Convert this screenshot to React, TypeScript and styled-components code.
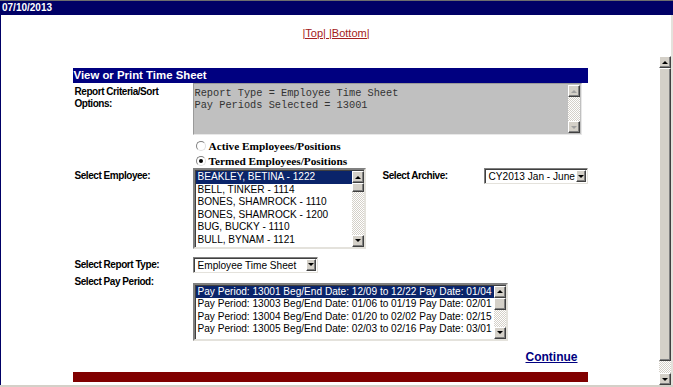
import styled, { createGlobalStyle } from "styled-components"

const GlobalStyle = createGlobalStyle`
    html, body {
        margin: 0;
        padding: 0;
        background: #fff;
    }
    body {
        width: 673px;
        height: 387px;
        overflow: hidden;
        font-family: "Liberation Sans", Arial, sans-serif;
    }
`

const employees = [
    "BEAKLEY, BETINA - 1222",
    "BELL, TINKER - 1114",
    "BONES, SHAMROCK - 1110",
    "BONES, SHAMROCK - 1200",
    "BUG, BUCKY - 1110",
    "BULL, BYNAM - 1121",
]

const payPeriods = [
    "Pay Period: 13001 Beg/End Date: 12/09 to 12/22 Pay Date: 01/04",
    "Pay Period: 13003 Beg/End Date: 01/06 to 01/19 Pay Date: 02/01",
    "Pay Period: 13004 Beg/End Date: 01/20 to 02/02 Pay Date: 02/15",
    "Pay Period: 13005 Beg/End Date: 02/03 to 02/16 Pay Date: 03/01",
]

interface ScrollBarProps {
    thumb?: number
    disabled?: boolean
    width?: number
}

const ScrollBar = ({ thumb, disabled, width = 12 }: ScrollBarProps) => (
    <Track $w={width}>
        <ArrowBtn><Arrow $up $disabled={disabled} /></ArrowBtn>
        {thumb ? <Thumb $h={thumb} /> : null}
        <TrackFill />
        <ArrowBtn><Arrow $disabled={disabled} /></ArrowBtn>
    </Track>
)

const App = () => {
    return (
        <>
            <GlobalStyle />
            <Page>
                <TopBar>07/10/2013</TopBar>
                <Body>
                    <LinkBar>
                        <NavLink>|Top| |Bottom|</NavLink>
                    </LinkBar>
                    <Frame>
                        <Content>
                            <Panel>
                                <PanelHeader>View or Print Time Sheet</PanelHeader>

                                <Row>
                                    <Label $top={3}>Report Criteria/Sort<br />Options:</Label>
                                    <CriteriaBox>
                                        <CriteriaText>
                                            Report Type = Employee Time Sheet{"\n"}Pay Periods Selected = 13001
                                        </CriteriaText>
                                        <ScrollBar disabled />
                                    </CriteriaBox>
                                </Row>

                                <Row $mt={3}>
                                    <Label />
                                    <RadioGroup>
                                        <RadioLine>
                                            <RadioDot />
                                            <RadioText>Active Employees/Positions</RadioText>
                                        </RadioLine>
                                        <RadioLine>
                                            <RadioDot $checked />
                                            <RadioText>Termed Employees/Positions</RadioText>
                                        </RadioLine>
                                    </RadioGroup>
                                </Row>

                                <Row>
                                    <Label $top={2}>Select Employee:</Label>
                                    <ListBox $w={173}>
                                        <ListItems>
                                            {employees.map((e, i) => (
                                                <ListItem key={e + i} $selected={i === 0}>{e}</ListItem>
                                            ))}
                                        </ListItems>
                                        <ScrollBar thumb={9} />
                                    </ListBox>
                                    <SideLabel>Select Archive:</SideLabel>
                                    <SelectBox $w={104}>
                                        <SelectText>CY2013 Jan - June</SelectText>
                                        <DropBtn><Arrow /></DropBtn>
                                    </SelectBox>
                                </Row>

                                <Row $mt={8} $center>
                                    <Label>Select Report Type:</Label>
                                    <SelectBox $w={125}>
                                        <SelectText>Employee Time Sheet</SelectText>
                                        <DropBtn><Arrow /></DropBtn>
                                    </SelectBox>
                                </Row>

                                <Row $mt={10}>
                                    <Label $top={-7}>Select Pay Period:</Label>
                                    <ListBox $w={315} $h={58}>
                                        <ListItems>
                                            {payPeriods.map((p, i) => (
                                                <ListItem key={p} $selected={i === 0}>{p}</ListItem>
                                            ))}
                                        </ListItems>
                                        <ScrollBar thumb={12} />
                                    </ListBox>
                                </Row>

                                <ContinueRow>
                                    <ContinueLink>Continue</ContinueLink>
                                </ContinueRow>

                                <FooterBar />
                            </Panel>
                        </Content>
                        <ScrollBar thumb={293} />
                    </Frame>
                </Body>
            </Page>
        </>
    )
}

export default App

const Page = styled.div`
    width: 673px;
    height: 387px;
    display: flex;
    flex-direction: column;
    box-sizing: border-box;
    border-bottom: 2px solid #d4d0c8;
`
const TopBar = styled.div`
    height: 14px;
    flex-shrink: 0;
    background: #000066;
    border-top: 1px solid #6e6e6e;
    color: #fff;
    font: bold 10px "Liberation Sans", Arial, sans-serif;
    line-height: 14px;
    padding-left: 2px;
`
const Body = styled.div`
    flex: 1;
    min-height: 0;
    display: flex;
    flex-direction: column;
    border-left: 1px solid #000066;
    border-right: 2px solid #e4e2dc;
`
const LinkBar = styled.div`
    height: 41px;
    flex-shrink: 0;
    display: flex;
    justify-content: center;
    padding-top: 12px;
    box-sizing: border-box;
`
const NavLink = styled.a`
    font-size: 11px;
    color: #a32020;
    text-decoration: underline;
    height: 13px;
`
const Frame = styled.div`
    flex: 1;
    min-height: 0;
    display: flex;
`
const Content = styled.div`
    flex: 1;
    display: flex;
    justify-content: center;
    padding-top: 12px;
`
const Panel = styled.div`
    width: 515px;
    display: flex;
    flex-direction: column;
`
const PanelHeader = styled.div`
    height: 15px;
    background: #000080;
    color: #fff;
    font: bold 11.4px "Liberation Sans", Arial, sans-serif;
    line-height: 15px;
    padding-left: 1px;
`
const Row = styled.div<{ $mt?: number; $center?: boolean }>`
    display: flex;
    align-items: ${p => (p.$center ? "center" : "flex-start")};
    margin-top: ${p => p.$mt ?? 0}px;
`
const Label = styled.div<{ $top?: number }>`
    width: 118px;
    flex-shrink: 0;
    padding-left: 2px;
    margin-top: ${p => p.$top ?? 0}px;
    font: bold 10px "Liberation Sans", Arial, sans-serif;
    letter-spacing: -0.45px;
    line-height: 12px;
    color: #000;
`
const SideLabel = styled(Label)`
    width: 101px;
    padding-left: 0;
    margin-left: 17px;
    margin-top: 2px;
`
const CriteriaBox = styled.div`
    width: 389px;
    height: 52px;
    box-sizing: border-box;
    display: flex;
    background: #c0c0c0;
    border: 1px solid;
    border-color: #9a9a9a #e8e8e8 #e8e8e8 #9a9a9a;
    padding: 1px;
`
const CriteriaText = styled.pre`
    flex: 1;
    margin: 0;
    padding: 2px 0 0 0;
    font: 10.3px "Liberation Mono", "Courier New", monospace;
    line-height: 12px;
    color: #333;
`
const RadioGroup = styled.div`
    display: flex;
    flex-direction: column;
`
const RadioLine = styled.label`
    height: 15px;
    display: flex;
    align-items: center;
    gap: 3px;
    padding-left: 3px;
`
const RadioDot = styled.span<{ $checked?: boolean }>`
    position: relative;
    width: 10px;
    height: 10px;
    box-sizing: border-box;
    border-radius: 50%;
    background: #fff;
    border: 1px solid;
    border-color: #808080 #e0e0e0 #e0e0e0 #808080;
    &::after {
        content: "";
        display: ${p => (p.$checked ? "block" : "none")};
        position: absolute;
        left: 2px;
        top: 2px;
        width: 4px;
        height: 4px;
        border-radius: 50%;
        background: #000;
    }
`
const RadioText = styled.span`
    font: bold 11.3px "Liberation Serif", "Times New Roman", serif;
    color: #000;
`
const ListBox = styled.div<{ $w: number; $h?: number }>`
    width: ${p => p.$w}px;
    ${p => (p.$h ? `height: ${p.$h}px;` : "")}
    display: flex;
    box-sizing: border-box;
    background: #fff;
    border: 2px solid;
    border-color: #808080 #e4e2dc #e4e2dc #808080;
    box-shadow: inset 1px 1px #404040;
    padding: 1px 0 0 1px;
`
const ListItems = styled.div`
    flex: 1;
    min-width: 0;
    overflow: hidden;
`
const ListItem = styled.div<{ $selected?: boolean }>`
    height: 12.6px;
    line-height: 12.6px;
    padding-left: 2px;
    font-size: 10.1px;
    white-space: nowrap;
    overflow: hidden;
    color: ${p => (p.$selected ? "#fff" : "#000")};
    background: ${p => (p.$selected ? "#0a246a" : "transparent")};
`
const SelectBox = styled.div<{ $w: number }>`
    width: ${p => p.$w}px;
    height: 16px;
    display: flex;
    box-sizing: border-box;
    background: #fff;
    border: 1px solid;
    border-color: #808080 #e4e2dc #e4e2dc #808080;
    box-shadow: inset 1px 1px #404040;
    padding: 1px;
`
const SelectText = styled.div`
    flex: 1;
    padding-left: 3px;
    font-size: 10.1px;
    line-height: 13px;
    white-space: nowrap;
    overflow: hidden;
`
const Bevel = `
    box-sizing: border-box;
    background: #d4d0c8;
    border: 1px solid;
    border-color: #fff #404040 #404040 #fff;
    box-shadow: inset -1px -1px #808080;
`
const DropBtn = styled.div`
    ${Bevel}
    width: 10px;
    display: flex;
    align-items: center;
    justify-content: center;
`
const Track = styled.div<{ $w: number }>`
    width: ${p => p.$w}px;
    flex-shrink: 0;
    display: flex;
    flex-direction: column;
    background: repeating-conic-gradient(#d4d0c8 0 25%, #fff 0 50%) 0 0 / 2px 2px;
`
const ArrowBtn = styled.div`
    ${Bevel}
    height: 12px;
    flex-shrink: 0;
    display: flex;
    align-items: center;
    justify-content: center;
`
const Thumb = styled.div<{ $h: number }>`
    ${Bevel}
    height: ${p => p.$h}px;
    flex-shrink: 0;
`
const TrackFill = styled.div`
    flex: 1;
`
const Arrow = styled.span<{ $up?: boolean; $disabled?: boolean }>`
    width: 0;
    height: 0;
    border-left: 3px solid transparent;
    border-right: 3px solid transparent;
    ${p => (p.$up ? "border-bottom" : "border-top")}: 3px solid ${p => (p.$disabled ? "#a0a0a0" : "#000")};
`
const ContinueRow = styled.div`
    display: flex;
    justify-content: flex-end;
    padding: 9px 10px 0 0;
`
const ContinueLink = styled.a`
    font: bold 12px "Liberation Sans", Arial, sans-serif;
    color: #000080;
    text-decoration: underline;
    line-height: 14px;
`
const FooterBar = styled.div`
    height: 10px;
    margin-top: 8px;
    background: #800000;
`
